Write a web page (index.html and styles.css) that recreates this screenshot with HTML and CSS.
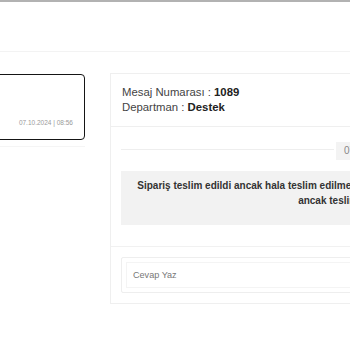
FILE: index.html
```html
<!DOCTYPE html>
<html lang="tr">
<head>
<meta charset="utf-8">
<title>Destek Talebi</title>
<link rel="stylesheet" href="styles.css">
</head>
<body>
<div class="topbar"></div>
<main class="main">
  <aside class="ticket-list">
    <div class="ticket-item">
      <div class="ticket-card">
        <span class="ticket-date">07.10.2024 | 08:56</span>
      </div>
    </div>
  </aside>
  <section class="panel">
    <header class="panel-head">
      <div>Mesaj Numarası : <b>1089</b></div>
      <div>Departman : <b>Destek</b></div>
    </header>
    <div class="panel-body">
      <div class="day-divider">
        <span class="line"></span>
        <span class="day-label">07.10.2024 | 08:56</span>
        <span class="line"></span>
      </div>
      <div class="bubble">Sipariş teslim edildi ancak hala teslim edilmedi olarak görünüyor, kontrol eder misiniz? ancak teslim edildi.</div>
    </div>
    <footer class="panel-foot">
      <div class="reply">Cevap Yaz</div>
    </footer>
  </section>
</main>
</body>
</html>
```
FILE: styles.css
```css
html, body {
  margin: 0;
  padding: 0;
  background: #fff;
  overflow: hidden;
  width: 350px;
  height: 350px;
}
body {
  font-family: "Liberation Sans", Arial, sans-serif;
  color: #333;
}
.topbar {
  height: 49px;
  border-top: 2px solid #b2b2b2;
  border-bottom: 1px solid #f3f3f3;
}
.main {
  display: flex;
  align-items: flex-start;
  gap: 25px;
  padding-top: 21px;
}
.ticket-list {
  flex: none;
  width: 216px;
  margin-left: -131px;
}
.ticket-item {
  margin-top: 1px;
  padding-bottom: 6px;
  border-bottom: 1px solid #f5f5f5;
}
.ticket-card {
  height: 52px;
  border: 1.5px solid #151515;
  border-radius: 4px;
  display: flex;
  flex-direction: column;
  justify-content: flex-end;
  align-items: flex-end;
  padding: 0 11px 12px;
}
.ticket-date {
  font-size: 6.5px;
  line-height: 8px;
  color: #9a9a9a;
}
.panel {
  flex: none;
  width: 549px;
  border: 1px solid #efefef;
}
.panel-head {
  padding: 11px 11px 11px 11px;
  font-size: 11.35px;
  line-height: 15px;
  color: #444;
  border-bottom: 1px solid #efefef;
}
.panel-head b {
  color: #222;
}
.panel-body {
  padding: 15px 10px 21px;
  border-bottom: 1px solid #f1f1f1;
}
.day-divider {
  display: flex;
  align-items: center;
  height: 18px;
}
.day-divider .line {
  flex: 1;
  height: 1px;
  background: #eeeeee;
  margin-top: -3px;
}
.day-label {
  background: #f3f3f3;
  color: #888;
  font-size: 10px;
  line-height: 18px;
  padding: 0 8px;
  margin: 0 2px;
}
.bubble {
  margin-top: 11px;
  width: 446px;
  box-sizing: border-box;
  padding: 7px 14px 17px;
  background: #f2f2f2;
  font-size: 10px;
  line-height: 15px;
  font-weight: bold;
  color: #333;
  text-align: center;
}
.panel-foot {
  padding: 10px 10px 10px;
}
.reply {
  height: 34px;
  border: 1px solid #eeeeee;
  border-radius: 2px;
  box-shadow: inset 0 0 0 4px #fff, inset 0 0 0 5px #f4f4f4;
  padding-left: 11px;
  font-size: 9.1px;
  line-height: 34px;
  color: #777;
}
```
